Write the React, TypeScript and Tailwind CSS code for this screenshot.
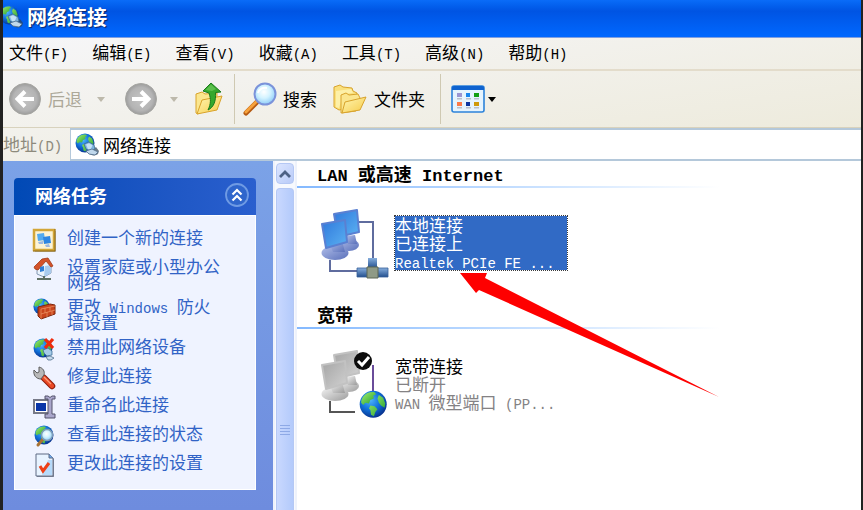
import type { ReactNode } from 'react';
import { clsx } from 'clsx';

const menuItems = [
  { label: '文件', hotkey: '(F)' },
  { label: '编辑', hotkey: '(E)' },
  { label: '查看', hotkey: '(V)' },
  { label: '收藏', hotkey: '(A)' },
  { label: '工具', hotkey: '(T)' },
  { label: '高级', hotkey: '(N)' },
  { label: '帮助', hotkey: '(H)' },
];

// Half-width characters are set in a monospaced face next to the Chinese text
const Latin = ({ children }: { children: ReactNode }) => (
  <span className="font-['Liberation_Mono',monospace] text-sm leading-2">{children}</span>
);

// Gradients shared by all icons
const IconDefs = () => (
  <svg className="absolute h-0 w-0" aria-hidden="true">
    <defs>
      <radialGradient id="sea" cx="0.4" cy="0.35" r="0.7">
        <stop offset="0" stopColor="#4fb4fa" />
        <stop offset="0.5" stopColor="#1173dc" />
        <stop offset="1" stopColor="#062b86" />
      </radialGradient>
      <linearGradient id="land" x1="0" y1="0" x2="1" y2="1">
        <stop offset="0" stopColor="#a6f070" />
        <stop offset="1" stopColor="#1d9c2c" />
      </linearGradient>
      <radialGradient id="disc" cx="0.5" cy="0.5" r="0.5">
        <stop offset="0" stopColor="#c4c4c4" />
        <stop offset="0.75" stopColor="#b4b4b4" />
        <stop offset="1" stopColor="#9c9c9c" />
      </radialGradient>
      <linearGradient id="folder" x1="0" y1="0" x2="1" y2="1">
        <stop offset="0" stopColor="#fff6b4" />
        <stop offset="1" stopColor="#f6cb48" />
      </linearGradient>
      <radialGradient id="lens" cx="0.45" cy="0.4" r="0.6">
        <stop offset="0" stopColor="#ffffff" />
        <stop offset="0.5" stopColor="#d3f3ff" />
        <stop offset="1" stopColor="#8fcdf8" />
      </radialGradient>
      <linearGradient id="screenBlue" x1="0" y1="0" x2="1" y2="1">
        <stop offset="0" stopColor="#2f78dc" />
        <stop offset="1" stopColor="#5cb2f2" />
      </linearGradient>
      <linearGradient id="standBlue" x1="0" y1="0" x2="1" y2="1">
        <stop offset="0" stopColor="#b0bde8" />
        <stop offset="1" stopColor="#5a70ba" />
      </linearGradient>
      <linearGradient id="screenGray" x1="0" y1="0" x2="1" y2="1">
        <stop offset="0" stopColor="#a4a4a4" />
        <stop offset="1" stopColor="#d2d2d2" />
      </linearGradient>
      <linearGradient id="standGray" x1="0" y1="0" x2="1" y2="1">
        <stop offset="0" stopColor="#f4f4f4" />
        <stop offset="1" stopColor="#9b9b9b" />
      </linearGradient>
      <linearGradient id="pipe" x1="0" y1="0" x2="0" y2="1">
        <stop offset="0" stopColor="#86aedd" />
        <stop offset="1" stopColor="#234f8e" />
      </linearGradient>
    </defs>
  </svg>
);

// Globe on a 20x20 grid
const Globe = () => (
  <g>
    <circle cx="10" cy="10" r="9.5" fill="url(#sea)" />
    <path d="M3 4.500C5 2 8 1 11 1.500L12 3l-2 1 .5 2L8 7l-1 2.500L4.500 9 3 10.500 1.500 9c0-2 .5-3 1.500-4.500Z" fill="url(#land)" />
    <path d="m8 11 3 .5 2 2-1.500 2-1 3-2-1L8 14l-1-1ZM14 3.500l3 2 1.500 4-.5 3-2.500-1.500-1.500-2-1-3Z" fill="url(#land)" />
  </g>
);

const NetworkGlobeIcon = ({ className }: { className: string }) => (
  <svg viewBox="0 0 24 24" className={className} aria-hidden="true">
    <Globe />
    <path d="M13 20c3 3 8 3 10 1l1-3-3-4Z" fill="#2d4355" opacity="0.7" />
    <path d="m9 11 5-2 5 3 1 4-5 2-4-2Z" fill="#7fb4e0" stroke="#39698f" strokeWidth="0.8" />
    <path d="m11 11.500 3-1.200 3.500 2-1.500 3.500-3 .5Z" fill="#c4e2f6" />
    <path d="m11 18 6-2 6 3-3 3-6-1Z" fill="#c0d8ec" stroke="#52708e" strokeWidth="0.8" />
  </svg>
);

const DiscIcon = ({ flip }: { flip?: boolean }) => (
  <svg viewBox="0 0 32 32" className={clsx('size-8', flip && 'rotate-180')} aria-hidden="true">
    <circle cx="16" cy="16" r="15.500" fill="url(#disc)" stroke="#a6a6a2" />
    <path d="M25 16H9M16 8.500 8.500 16l7.500 7.500" fill="none" stroke="#fff" strokeWidth="4" />
  </svg>
);

const Caret = ({ className }: { className: string }) => (
  <svg viewBox="0 0 8 5" className={clsx('h-[5px] w-2', className)} aria-hidden="true">
    <path d="M0 0h8L4 5Z" fill="currentColor" />
  </svg>
);

const FolderUpIcon = () => (
  <svg viewBox="0 0 30 34" className="h-[34px] w-[30px]" aria-hidden="true">
    <path d="m2 12 6-2 3 2 12-1v5L4 32l-2-1Z" fill="#fbe68e" stroke="#d9a32a" />
    <path d="M8 18 28 14l-5 14L3 32Z" fill="url(#folder)" stroke="#d9a32a" />
    <path d="M9 9 17 1l10 9-5.500.5C22 19 20 25 14 28c3-6 3-11 1-17Z" fill="#35a82c" stroke="#1a7a1b" />
    <path d="M11.500 8 17 2.500l5 4.500-4 2Z" fill="#5cc04c" />
  </svg>
);

const SearchIcon = () => (
  <svg viewBox="0 0 34 34" className="size-[34px]" aria-hidden="true">
    <path d="m3 31 12-12" stroke="#b65a12" strokeWidth="5" strokeLinecap="round" />
    <path d="m3 30 11-11" stroke="#f6a23c" strokeWidth="3" strokeLinecap="round" />
    <circle cx="22" cy="12" r="10.500" fill="url(#lens)" stroke="#7b93da" strokeWidth="2" />
    <path d="M15 11c1-4 5-6 9-5" fill="none" stroke="#fff" strokeWidth="2" />
  </svg>
);

const FoldersIcon = () => (
  <svg viewBox="0 0 34 30" className="h-[30px] w-[34px]" aria-hidden="true">
    <path d="m1 3 6-2 3 2 9 1 1 3 4 2-2 14-16 3-5-3Z" fill="#fae07c" stroke="#d8a32c" />
    <path d="m3 7 15-2 2 4-10 1-4 14-3-1Z" fill="#fdf0a8" />
    <path d="m8 11 5-2 3 2 9-1 2 4-4 13-15 2Z" fill="#fbe68e" stroke="#d8a32c" />
    <path d="m12 18 21-5-6 13-18 3Z" fill="url(#folder)" stroke="#d8a32c" />
  </svg>
);

const ViewsIcon = () => (
  <svg viewBox="0 0 34 28" className="h-7 w-[34px]" aria-hidden="true">
    <rect x="1" y="1" width="32" height="26" rx="2" fill="#e6f4fe" stroke="#2c83da" strokeWidth="1.600" />
    <path d="M1 5V2.500Q1 1 3 1h28q2 0 2 1.500V5Z" fill="#0f63cf" />
    <path d="M6 13h5v1.500H6zM15 13h5v1.500h-5zM23 13h5v1.500h-5zM6 22h5v1.500H6zM15 22h5v1.500h-5zM23 22h5v1.500h-5z" fill="#b9bfc9" />
    <path d="M6 8h5v4H6z" fill="#9a96d2" />
    <path d="M15 8h4v4h-4z" fill="#1786ee" />
    <path d="M23 8h5v4h-5z" fill="#12a012" />
    <path d="M6 17h5v4H6z" fill="#fb7a48" />
    <path d="M15 17h4v4h-4z" fill="#0d36a0" />
    <path d="M23 17h5v4h-5z" fill="#cf9a0b" />
  </svg>
);

const TaskIcon = ({ children }: { children: ReactNode }) => (
  <svg viewBox="0 0 22 22" className="size-[22px] shrink-0 overflow-visible" aria-hidden="true">
    {children}
  </svg>
);

const tasks = [
  {
    label: '创建一个新的连接',
    icon: (
      <>
        <path d="M2 2h21v21H2z" fill="#8d8d91" opacity="0.6" />
        <path d="M1 1h20v20H1z" fill="#fdf3d4" stroke="#d3a638" strokeWidth="2.500" />
        <path d="M0 22h22V0" fill="none" stroke="#8f6a12" />
        <path d="m4 5 7-1 1 7-7 1Z" fill="#52aaf0" />
        <path d="m10 8 7-1 1 7-7 1Z" fill="#2f86e2" />
        <path d="m5 13 5-1v3H6ZM12 16l4-1 1 3h-4Z" fill="#9fb9e0" />
      </>
    ),
  },
  {
    label: '设置家庭或小型办公网络',
    icon: (
      <>
        <path d="M4 9v7l7 3 7-4V7l-5-5Z" fill="#eaf3fc" stroke="#8499b3" />
        <path d="m12 8 6-1v8l-7 4Z" fill="#a9cbed" />
        <path d="M1 9 9 1l6-1 5 8-2 1-5-6-8 9-3-1Z" fill="#d3532b" stroke="#a23816" strokeWidth="0.8" />
        <path d="m7 9 4-1v5l-4 1Z" fill="#2f7dd4" />
        <path d="M11 18v3M4 21h14" stroke="#5f6f62" strokeWidth="2" />
      </>
    ),
  },
  {
    label: (
      <>
        更改
        <Latin> Windows </Latin>
        防火墙设置
      </>
    ),
    icon: (
      <>
        <g transform="scale(.85)">
          <Globe />
        </g>
        <path d="m5 9 12-3 5 1v9L8 21l-3-3Z" fill="#c9451d" stroke="#7d260d" />
        <path d="m8 11 14-3M8 16l14-4M12 10v5M17 9v4M14 14v5M19 13v4M8 11v10" fill="none" stroke="#ee9a68" strokeWidth="0.7" />
      </>
    ),
  },
  {
    label: '禁用此网络设备',
    icon: (
      <>
        <Globe />
        <path d="m10 12 5-2 4 3v4l-5 1-3-3Z" fill="#a5cbe8" stroke="#3f6f97" strokeWidth="0.8" />
        <path d="m13 19 4-1 4 2-3 2h-3Z" fill="#c6dbed" stroke="#52708e" strokeWidth="0.8" />
        <path d="m12 1 8 9M20 1l-8 9" stroke="#ee2c0c" strokeWidth="3.200" />
      </>
    ),
  },
  {
    label: '修复此连接',
    icon: (
      <>
        <path d="m11 11 8 8" stroke="#8e1c0a" strokeWidth="6.500" strokeLinecap="round" />
        <path d="m11 11 8 8" stroke="#ea4a26" strokeWidth="4.500" strokeLinecap="round" />
        <path d="m11 10 7 7" stroke="#ff9c78" strokeWidth="1.200" />
        <path d="m1 3 3 3 2-1V0c4 1 6 4 5 8l-3 4C3 12 0 8 1 3Z" fill="#b8b8b8" stroke="#5c5c5c" />
      </>
    ),
  },
  {
    label: '重命名此连接',
    icon: (
      <>
        <path d="M1 4h15v13H1z" fill="#fff" stroke="#777a88" strokeWidth="2" />
        <path d="M3 7h10v8H3z" fill="#0a36a8" />
        <path d="M12 0h3l2 1.500L19 0h3v3h-3v15h3v4H12v-4h3V3h-3Z" fill="#a9a6cb" stroke="#55546d" />
      </>
    ),
  },
  {
    label: '查看此连接的状态',
    icon: (
      <>
        <g transform="translate(1)">
          <Globe />
        </g>
        <path d="m10 14-5 6" stroke="#a87334" strokeWidth="3" strokeLinecap="round" />
        <circle cx="14" cy="10" r="5.500" fill="url(#lens)" stroke="#7d9cb8" strokeWidth="1.500" />
      </>
    ),
  },
  {
    label: '更改此连接的设置',
    icon: (
      <>
        <path d="M4 1h13l4 4v18H4z" fill="#848a99" />
        <path d="M3 0h13l4 4v18H3z" fill="#e8f3ff" stroke="#5f6a84" />
        <path d="M15 6h4v15H9Z" fill="#b6dafa" />
        <path d="M16 0v4h4" fill="#6caaf0" stroke="#5f6a84" />
        <path d="m7 12 3 5 6-8" fill="none" stroke="#ee4018" strokeWidth="3" />
      </>
    ),
  },
];

// Pair of tilted monitors used by every connection
const Monitors = ({ screen, stand, edge }: { screen: string; stand: string; edge: string }) => (
  <g strokeLinejoin="round">
    <ellipse cx="28" cy="35" rx="10" ry="6" fill={stand} />
    <path d="m25 26 9-1 2 9h-9Z" fill={stand} />
    <path d="m13 4 23-4 2 22-21 5Z" fill={screen} stroke={edge} strokeWidth="2" />
    <ellipse cx="14" cy="43" rx="13.500" ry="7" fill={stand} />
    <path d="m9 34 12-3 3 11H12Z" fill={stand} />
    <path d="m1 14 23-4 2 22-21 6Z" fill={screen} stroke={edge} strokeWidth="2" />
  </g>
);

const LanIcon = () => (
  <svg viewBox="0 0 68 70" className="h-[70px] w-[68px] shrink-0 overflow-visible" aria-hidden="true">
    <path d="M37 12h15v36M9 50v11h27" fill="none" stroke="#5f6c9e" strokeWidth="2" />
    <Monitors screen="url(#screenBlue)" stand="url(#standBlue)" edge="#5a80d2" />
    <path d="M47 48h9v10h-9z" fill="url(#pipe)" />
    <path d="M36 58h31v9H36z" fill="url(#pipe)" stroke="#38609a" strokeWidth="0.8" />
    <path d="M46 57h11v11H46z" fill="#8f9a86" stroke="#5c6654" />
  </svg>
);

const BroadbandIcon = () => (
  <svg viewBox="0 0 68 70" className="h-[70px] w-[68px] shrink-0 overflow-visible" aria-hidden="true">
    <path d="M52 14v30" stroke="#6a4c9a" strokeWidth="2" />
    <path d="M9 50v11h25" fill="none" stroke="#555" strokeWidth="2" />
    <Monitors screen="url(#screenGray)" stand="url(#standGray)" edge="#c2c2c2" />
    <circle cx="42" cy="10" r="9" fill="#0c0c0c" />
    <path d="m37 10 4 4 7-8" fill="none" stroke="#fff" strokeWidth="3" />
    <g transform="translate(38 39) scale(1.420)">
      <Globe />
    </g>
  </svg>
);

const GroupHeading = ({ children }: { children: ReactNode }) => (
  <>
    <h2 className="pl-5 text-lg leading-6 font-bold">{children}</h2>
    <div className="mt-px h-0.5 w-3/4 bg-linear-to-r from-[#84b9ff] to-white" />
  </>
);

const Separator = () => <div className="h-[50px] w-px bg-[#cfc9b2]" />;

const App = () => {
  return (
    <div className="flex min-h-screen flex-col overflow-hidden border-r-2 border-l-3 border-[#222] bg-white font-['Noto_Sans_CJK_SC',sans-serif] text-[17px] leading-6 text-black">
      <IconDefs />

      {/* Title bar */}
      <header className="flex h-[38px] items-center gap-1 border-b border-[#7f9fe0] bg-linear-to-b from-[#0a6cf8] via-[#0054e3] via-30% to-[#0068ff] pb-1">
        <NetworkGlobeIcon className="-ml-1 size-6" />
        <h1 className="text-xl leading-6 font-bold text-white [text-shadow:1px_1px_1px_#0a246a]">网络连接</h1>
      </header>

      <div className="bg-linear-to-br from-[#f6f6f8] to-[#ece9d8]">
        {/* Menu */}
        <nav className="flex h-[33px] items-center gap-6 border-b-2 border-[#e3dccb] pb-1 pl-1.5">
          {menuItems.map((item) => (
            <button key={item.hotkey} className="whitespace-nowrap">
              {item.label}
              <Latin>{item.hotkey}</Latin>
            </button>
          ))}
        </nav>

        {/* Toolbar */}
        <div className="flex h-[57px] items-center border-b border-[#d8d2bd] pl-1.5">
          <button className="flex items-center gap-[7px] text-[#aca899]" disabled>
            <DiscIcon />
            后退
          </button>
          <Caret className="ml-[15px] text-[#bdb9ab]" />
          <button className="ml-5" aria-label="前进" disabled>
            <DiscIcon flip />
          </button>
          <Caret className="ml-[13px] text-[#bdb9ab]" />
          <button className="mr-2.5 ml-4" aria-label="向上">
            <FolderUpIcon />
          </button>
          <Separator />
          <button className="ml-2 flex items-center gap-1.5">
            <SearchIcon />
            搜索
          </button>
          <button className="mr-[15px] ml-4 flex items-center gap-[7px]">
            <FoldersIcon />
            文件夹
          </button>
          <Separator />
          <button className="ml-2.5 flex items-center gap-[3px]" aria-label="查看方式">
            <ViewsIcon />
            <Caret className="text-black" />
          </button>
        </div>

        {/* Address bar */}
        <div className="flex h-[33px] items-stretch">
          <label htmlFor="address" className="w-[67px] shrink-0 pt-0.5 leading-7 whitespace-nowrap text-[#8d8a7c]">
            地址<Latin>(D)</Latin>
          </label>
          <div className="flex flex-1 items-center gap-1 border-y-2 border-l border-[#b4c8da] bg-white pl-1">
            <NetworkGlobeIcon className="size-6" />
            <input id="address" defaultValue="网络连接" className="h-6 min-w-0 flex-1 bg-transparent outline-none" />
          </div>
        </div>
      </div>

      <div className="flex flex-1">
        {/* Task pane */}
        <aside className="w-[270px] shrink-0 bg-linear-to-b from-[#7ba2e7] to-[#6e8cde] pt-[17px] pr-[17px] pb-[18px] pl-[11px]">
          <div className="flex h-[37px] items-center justify-between rounded-t bg-linear-to-r from-[#0049b5] to-[#2a5fce] pr-1.5 pb-1 pl-[21px]">
            <h2 className="text-lg leading-6 font-bold text-white">网络任务</h2>
            <button aria-label="折叠">
              <svg viewBox="0 0 26 26" className="size-[26px]" aria-hidden="true">
                <circle cx="13" cy="13" r="11" fill="#2f66cc" stroke="#6f9be4" strokeWidth="1.800" />
                <path d="m8.500 12.500 4.500-4.500 4.500 4.500M8.500 18.500l4.500-4.500 4.500 4.500" fill="none" stroke="#fff" strokeWidth="2.200" />
              </svg>
            </button>
          </div>
          <ul className="flex flex-col gap-[7px] border border-white bg-[#eff3ff] pt-[13px] pr-[30px] pb-[13px] pl-[18px]">
            {tasks.map((task, index) => (
              <li key={index}>
                <a href="#" className="flex items-start gap-3 text-[#3163c6]">
                  <TaskIcon>{task.icon}</TaskIcon>
                  <span className="pb-px leading-4">{task.label}</span>
                </a>
              </li>
            ))}
          </ul>
        </aside>

        {/* Scroll bar */}
        <div className="flex w-6 shrink-0 flex-col gap-1 border-x-2 border-[#eef2fb] bg-[#f7f9fe] px-px pt-0.5">
          <button
            className="flex h-[21px] items-center justify-center rounded-sm border border-[#b5c8f4] bg-linear-to-br from-[#dbe5ff] to-[#b9cbf8]"
            aria-label="向上滚动"
          >
            <svg viewBox="0 0 12 8" className="h-2 w-3" aria-hidden="true">
              <path d="m1 7 5-5 5 5" fill="none" stroke="#4d6185" strokeWidth="2.800" />
            </svg>
          </button>
          <div className="flex flex-1 flex-col items-center gap-0.5 rounded-t-sm border-x border-t border-[#b5c8f4] bg-linear-to-r from-[#c9d8fe] to-[#b3cafb] pt-[236px]">
            <div className="h-px w-2.5 bg-[#8ea9e6]" />
            <div className="h-px w-2.5 bg-[#8ea9e6]" />
            <div className="h-px w-2.5 bg-[#8ea9e6]" />
            <div className="h-px w-2.5 bg-[#8ea9e6]" />
          </div>
        </div>

        {/* Connections */}
        <main className="relative min-w-0 flex-1">
          <section>
            <GroupHeading>
              <span className="font-['Liberation_Mono',monospace] text-[17px] leading-2">LAN </span>
              或高速
              <span className="font-['Liberation_Mono',monospace] text-[17px] leading-2"> Internet</span>
            </GroupHeading>
            <div className="flex items-start gap-1.5 pt-[22px] pb-[22px] pl-6">
              <LanIcon />
              <div className="mt-1.5 w-[172px] bg-[#316ac5] leading-[18px] text-white outline-1 outline-[#3a3a3a] outline-dotted">
                <p>本地连接</p>
                <p>已连接上</p>
                <p className="whitespace-nowrap">
                  <Latin>Realtek PCIe FE ...</Latin>
                </p>
              </div>
            </div>
          </section>

          <section>
            <GroupHeading>宽带</GroupHeading>
            <div className="flex items-start gap-1.5 pt-[22px] pl-6">
              <BroadbandIcon />
              <div className="mt-1.5 w-[172px] leading-[18px] text-[#848284]">
                <p className="text-black">宽带连接</p>
                <p>已断开</p>
                <p className="whitespace-nowrap">
                  <Latin>WAN </Latin>
                  微型端口
                  <Latin> (PP...</Latin>
                </p>
              </div>
            </div>
          </section>

          {/* Pointer drawn over the list */}
          <svg viewBox="0 0 260 126" className="pointer-events-none absolute top-28 left-[163px] h-[126px] w-[260px]" aria-hidden="true">
            <path d="M0 0h27l-2 5 234 119L19 17l-3 3Z" fill="#fe0000" />
          </svg>
        </main>
      </div>
    </div>
  );
};

export default App;
